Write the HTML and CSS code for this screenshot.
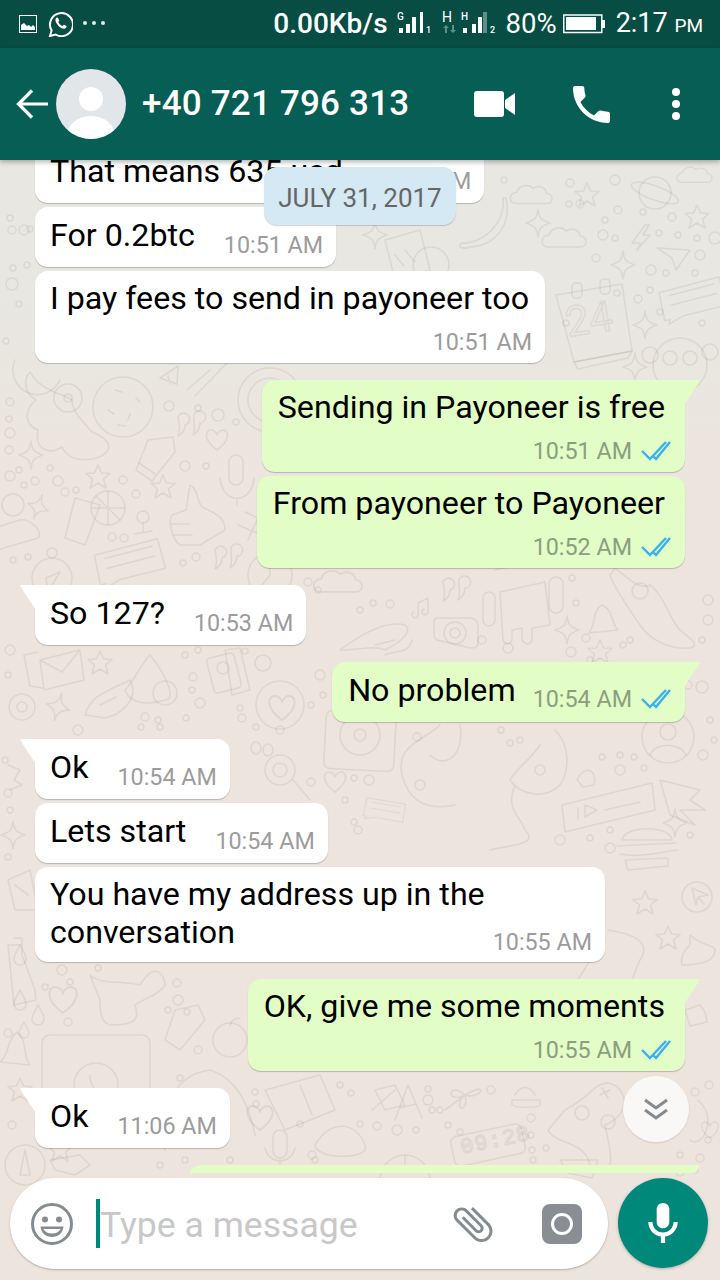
FILE: index.html
```html
<!DOCTYPE html>
<html lang="en">
<head>
<meta charset="utf-8">
<title>WhatsApp chat</title>
<link rel="stylesheet" href="styles.css">
</head>
<body>
<div class="app">
  <svg class="wallpaper" width="720" height="1280" viewBox="0 0 720 1280" aria-hidden="true">
    <defs>
      <path id="s5" d="M0-12 3.5-4 12-3.5 5.5 2 8 11 0 6-8 11-5.5 2-12-3.5-3.5-4Z"/>
      <path id="s4" d="M0-14C1-5 3-3 12 0 3 3 1 5 0 14-1 5-3 3-12 0-3-3-1-5 0-14Z"/>
      <path id="ht" d="M0 10C-14 0-12-10-6-10-3-10 0-7 0-5 0-7 3-10 6-10 12-10 14 0 0 10Z"/>
      <path id="cl" d="M-18 8C-26 8-26-3-17-4-15-12-4-13 0-8 6-12 14-9 14-3 22-2 22 8 14 8Z"/>
      <path id="dr" d="M0-10C4-3 6 0 6 4A6 6 0 0 1-6 4C-6 0-4-3 0-10Z"/>
      <path id="qt" d="M-10-8A6 6 0 1 1-3 0C-3 5-6 9-10 11-8 7-8 4-9-2ZM6-10A6 6 0 1 1 12-2C12 3 9 8 5 10 7 6 7 3 6-4Z"/>
      <g id="ch"><path d="M-32-10 32-22 38 8-8 16-24 24-22 19-28 20Z"/><path d="M-22-6 26-15M-20 4 28-5"/></g>
    </defs>
    <g class="doodle">
      <use href="#cl" transform="translate(533 196) scale(.95)"/>
      <use href="#s5" transform="translate(587 195)"/>
      <ellipse cx="655" cy="193" rx="16" ry="16"/><ellipse cx="655" cy="193" rx="25" ry="7" transform="rotate(20 655 193)"/>
      <use href="#s5" transform="translate(697 217)"/>
      <use href="#cl" transform="translate(696 176) scale(.8)"/>
      <path d="M503 198C506 225 480 245 462 243 456 246 462 250 470 247 495 246 512 225 506 198Z"/>
      <use href="#s4" transform="translate(538 223)"/>
      <use href="#cl" transform="translate(566 239)"/>
      <path d="M645 225 632 243H641L637 250 650 235H643L649 225Z"/>
      <path d="M657 248 690 250 676 270 672 258Z"/>
      <use href="#s4" transform="translate(623 265)"/>
      <path d="M556 295 622 284 632 351 574 362Z"/><path d="M574 362 632 351 628 358 578 369Z"/>
      <rect x="572" y="283" width="10" height="15" rx="4"/><rect x="600" y="279" width="10" height="15" rx="4"/>
      <text class="dtext" x="568" y="337" transform="rotate(-9 568 337)">24</text>
      <use href="#ch" transform="translate(690 300) rotate(-4) scale(.95)"/>
      <use href="#s4" transform="translate(645 325)"/>
      <use href="#s4" transform="translate(635 367)"/>
      <circle cx="680" cy="365" r="27"/><circle cx="670" cy="358" r="7"/><circle cx="690" cy="358" r="7"/><circle cx="650" cy="355" r="8"/><circle cx="710" cy="352" r="8"/>
      <path d="M385 240 420 230 430 270 395 280ZM405 250 415 262M395 255 404 266"/>
      <circle cx="431" cy="265" r="18"/>
      <use href="#s4" transform="translate(375 235)"/>

      <path d="M30 372C22 380 26 395 36 400 24 410 24 425 38 430 34 450 50 455 62 447 70 465 100 462 108 450 112 442 100 435 92 432 82 420 72 412 72 400 60 392 42 392 30 372Z"/>
      <circle cx="68" cy="398" r="14"/><circle cx="68" cy="398" r="4"/>
      <path d="M15 360A24 24 0 0 0 60 380"/>
      <circle cx="123" cy="407" r="30"/><path d="M115 390 122 392M136 398 140 402M108 410 114 414M130 414 128 420M118 425 126 426"/>
      <use href="#s4" transform="translate(31 455)"/>
      <path d="M173 437 148 440 136 470 152 481 175 452Z"/><path d="M139 463 155 474"/>
      <use href="#s5" transform="translate(98 477)"/>
      <use href="#s5" transform="translate(163 487)"/>
      <rect x="229" y="455" width="14" height="30" rx="7"/><path d="M220 478C222 505 252 505 254 478M237 500V505"/>
      <use href="#ht" transform="translate(217 440)"/>
      <use href="#qt" transform="translate(188 425)"/>
      <path d="M190 485C200 490 196 505 204 508 220 515 225 520 225 530L200 545 180 545C172 540 168 520 172 515L186 510C188 500 188 495 190 485Z"/><path d="M172 524H190M174 535H192"/>
      <path d="M75 498 100 505 85 545 65 538Z"/><circle cx="108" cy="508" r="17"/><path d="M108 491V525M92 508H125M96 496 120 520"/>
      <use href="#s4" transform="translate(38 507) rotate(20) scale(.9)"/>
      <circle cx="13" cy="505" r="11"/><path d="M0 549 38 538C44 530 28 518 20 520L0 526"/>
      <circle cx="143" cy="517" r="6"/><path d="M143 523V532M135 534 152 531"/>
      <use href="#ch" transform="translate(127 563) rotate(-4)"/>
      <circle cx="52" cy="578" r="20"/><circle cx="52" cy="553" r="5"/><path d="M60 572 48 592 46 578Z"/>
      <circle cx="270" cy="400" r="32"/><circle cx="270" cy="400" r="22"/>
      <path d="M187 390 210 370M195 396 230 360"/>
      <path d="M160 378 178 366 177 384ZM168 376 170 384"/>
      <path d="M245 512 258 518 248 540M238 525 262 535"/>
      <use href="#qt" transform="translate(225 558)"/>
      <circle cx="270" cy="575" r="22"/><path d="M270 560V575L262 585"/>
      <use href="#cl" transform="translate(340 583) scale(1.1)"/>

      <use href="#qt" transform="translate(453 590)"/>
      <rect x="483" y="592" width="12" height="34" rx="6"/><rect x="549" y="577" width="14" height="36" rx="7"/>
      <path d="M500 592 545 582 550 625 532 628V640C530 646 524 644 522 640V628L512 630V640C510 646 504 644 503 640Z"/>
      <path d="M495 570 540 560"/>
      <path d="M437 618H470C476 618 478 622 478 626V643C478 648 474 648 470 648L437 640C434 638 434 636 434 632V622C434 620 435 618 437 618Z"/><circle cx="455" cy="633" r="11"/><circle cx="455" cy="633" r="5"/>
      <path d="M418 615V603L428 598V612M418 615A3 3 0 1 1 414 612M428 612A3 3 0 1 1 424 609"/>
      <path d="M602 605C592 610 596 625 589 633L618 630C610 622 614 610 602 605Z"/>
      <path d="M615 568C630 580 640 590 650 585 664 595 670 620 680 630 692 640 700 645 690 648 670 650 650 640 640 625 630 610 615 590 610 575Z"/>
      <circle cx="640" cy="591" r="8"/>
      <path d="M340 650C360 635 385 620 405 625 412 630 405 640 385 650 375 645 360 650 340 650Z"/>
      <path d="M375 645 395 640M385 655C395 650 408 655 412 640"/>
      <use href="#s4" transform="translate(567 630)"/>
      <use href="#s5" transform="translate(600 652)"/>
      <rect x="325" y="712" width="70" height="58" rx="6" transform="rotate(3 360 740)"/><circle cx="360" cy="735" r="20"/><circle cx="360" cy="735" r="6"/>
      <circle cx="668" cy="737" r="26"/><circle cx="668" cy="732" r="8"/><path d="M650 755C655 742 680 742 686 755"/>
      <path d="M440 725C425 740 395 745 402 775 410 805 430 810 455 805M460 725C465 755 445 770 430 755"/>
      <path d="M515 785C505 810 520 815 525 830 540 845 510 845 490 850M555 730C570 745 570 770 560 785 545 800 520 795 510 780 515 770 530 760 540 745"/>
      <circle cx="420" cy="785" r="5"/><circle cx="540" cy="770" r="5"/>
      <path d="M577 780C583 765 598 768 594 785L583 787Z"/>
      <path d="M562 805 652 783 655 810 565 832Z"/><path d="M578 808V820M585 805 597 810 585 817ZM605 810 640 802"/>
      <use href="#ht" transform="translate(335 782)"/>
      <path d="M660 780 700 790 690 800 705 810 680 810 695 825 670 815Z"/>
      <use href="#s4" transform="translate(675 823)"/>
      <use href="#ch" transform="translate(383 810) rotate(20) scale(.6)"/>
      <path d="M225 650 240 648 250 690 232 695Z"/>
      <rect x="210" y="655" width="28" height="36" rx="4" transform="rotate(-14 224 673)"/>
      <circle cx="223" cy="668" r="6"/>
      <use href="#s5" transform="translate(100 663)"/>
      <path d="M40 660 80 650 84 680 44 690ZM40 660 62 672 80 650"/>
      <path d="M24 655 38 652M24 655 30 686 42 688"/>
      <circle cx="22" cy="707" r="13"/><circle cx="22" cy="707" r="5"/>
      <use href="#s4" transform="translate(58 707) rotate(15)"/>
      <path d="M85 715C90 695 110 690 130 680 140 700 120 715 105 718ZM100 705 116 697"/>
      <path d="M125 690C135 680 140 665 150 655 170 680 175 700 165 700 150 705 130 705 125 690Z"/>
      <circle cx="165" cy="693" r="12"/>
      <circle cx="263" cy="663" r="8"/><use href="#ht" transform="translate(282 708) scale(1.2)"/><circle cx="280" cy="705" r="24"/>
      <circle cx="280" cy="770" r="15"/><circle cx="280" cy="770" r="7"/><ellipse cx="256" cy="748" rx="5" ry="6"/><ellipse cx="268" cy="750" rx="5" ry="6"/><path d="M293 780 310 800"/>
      <path d="M8 765 20 770 14 780 22 785 10 790"/>
      <use href="#s4" transform="translate(13 835)"/>
      <path d="M8 880 30 870 38 910 15 910ZM15 885 28 895"/>
      <path d="M8 945H22V955L35 990 36 1000 14 1005ZM14 938H22V945"/>
      <use href="#dr" transform="translate(20 955)"/>
      <use href="#dr" transform="translate(20 1000)"/><use href="#dr" transform="translate(38 1015)"/><use href="#dr" transform="translate(24 1030) scale(.8)"/>
      <use href="#ht" transform="translate(63 1000) scale(1.3)"/>
      <path d="M90 975C100 985 120 980 140 985 155 960 165 975 165 985 160 995 140 1000 135 1005 140 1020 135 1025 110 1025 100 1022 100 1010 100 1000Z"/>
      <path d="M198 1005 175 1010 165 1040 180 1050 205 1020Z"/>
      <circle cx="230" cy="1040" r="17"/><path d="M230 1025C232 1018 238 1018 240 1018"/>
      <path d="M17 1032C6 1040 10 1055 0 1062L30 1065C22 1055 28 1040 17 1032Z"/>
      <rect x="42" y="1035" width="108" height="70" rx="8"/><circle cx="96" cy="1085" r="22"/><path d="M90 1075C90 1085 95 1092 105 1095"/>
      <use href="#s5" transform="translate(20 1090)"/>
      <path d="M165 1150C165 1100 175 1075 210 1070 240 1080 250 1110 255 1135"/>
      <circle cx="180" cy="1078" r="3"/>
      <path d="M265 1090 320 1075 335 1110 285 1130ZM300 1085 312 1115"/>
      <use href="#ht" transform="translate(260 1118) scale(1.2)"/>
      <rect x="273" y="1130" width="14" height="28" rx="7"/><path d="M265 1148C268 1165 292 1165 295 1148M280 1160V1165"/>
      <path d="M315 1145C330 1120 355 1120 365 1145 372 1160 315 1160 315 1145Z"/>
      <circle cx="25" cy="1165" r="20"/><path d="M20 1175 25 1150 30 1175Z"/>
      <path d="M50 1160 80 1155 90 1165 75 1175 55 1170Z"/>
      <use href="#s5" transform="translate(60 1150)"/>
      <path d="M188 1130C180 1120 175 1120 170 1110"/>

      <path d="M375 1090 395 1085 405 1105 385 1110ZM372 1110 395 1090"/>
      <path d="M395 1120 408 1085 422 1118M400 1108 416 1104"/>
      <path d="M465 1095C448 1080 445 1105 465 1095 450 1110 470 1115 465 1095 482 1100 490 1080 465 1095ZM465 1095 445 1110"/>
      <path d="M515 1095C520 1085 530 1085 535 1095M512 1100H540V1105C540 1108 515 1108 512 1105Z"/>
      <path d="M565 1110C585 1100 590 1090 600 1085 620 1075 640 1110 605 1125 610 1150 620 1180 590 1165 585 1140 555 1145 548 1130Z"/>
      <circle cx="582" cy="1113" r="7"/><circle cx="608" cy="1122" r="7"/><path d="M600 1095 610 1090M602 1088 608 1098"/>
      <rect x="452" y="1130" width="72" height="30" rx="6" transform="rotate(-12 488 1145)"/>
      <text class="dsmall" x="462" y="1154" transform="rotate(-12 462 1154)">09:28</text>
      <circle cx="405" cy="1180" r="25"/><path d="M405 1155V1173M382 1170 428 1170"/>
      <path d="M560 1160H598L592 1178 568 1173Z"/>
      <use href="#ht" transform="translate(710 1130) scale(.8)"/>
      <path d="M698 1100C720 1120 700 1150 690 1140"/>

      <path d="M622 840C625 825 670 825 672 840ZM617 846 676 843M620 854C640 858 660 852 678 850M625 860 668 858 668 866 628 870Z"/>
      <circle cx="697" cy="897" r="15"/><path d="M692 888 708 895 698 897 696 905ZM698 897 704 904"/>
      <use href="#s5" transform="translate(645 903)"/>
      <use href="#s5" transform="translate(668 938)"/>
      <path d="M690 935C700 945 715 945 715 950 715 965 690 965 682 965 680 955 685 950 690 945Z"/>
      <path d="M608 930C640 935 650 945 640 960 635 970 635 975 630 985"/>
      <path d="M700 1005 705 1012 707 1022 690 1026 685 1010Z"/>
      <path d="M412 990C470 980 500 1020 520 1040"/>
      <path d="M560 1010 590 960M610 1000 630 1010"/>
    </g>
    <g class="dots">
      <circle cx="504" cy="180" r="3"/><circle cx="570" cy="183" r="4"/><circle cx="569" cy="204" r="3"/><circle cx="580" cy="204" r="4"/><circle cx="615" cy="180" r="5"/><circle cx="618" cy="210" r="4"/><circle cx="605" cy="220" r="3"/><circle cx="643" cy="212" r="3"/><circle cx="672" cy="217" r="4"/><circle cx="603" cy="235" r="5"/><circle cx="615" cy="238" r="3"/><circle cx="659" cy="233" r="3"/><circle cx="678" cy="235" r="3"/><circle cx="697" cy="238" r="3"/><circle cx="715" cy="238" r="6"/><circle cx="700" cy="255" r="5"/><circle cx="596" cy="258" r="4"/><circle cx="617" cy="293" r="3"/>
      <circle cx="651" cy="270" r="5"/><circle cx="666" cy="273" r="3"/><circle cx="695" cy="273" r="3"/><circle cx="638" cy="299" r="4"/><circle cx="650" cy="290" r="3"/><circle cx="660" cy="312" r="3"/><circle cx="702" cy="323" r="3"/><circle cx="566" cy="323" r="3"/><circle cx="30" cy="229" r="3"/><circle cx="10" cy="218" r="3"/><circle cx="24" cy="230" r="5"/><circle cx="27" cy="265" r="3"/><circle cx="12" cy="230" r="4"/><circle cx="13" cy="268" r="3"/><circle cx="12" cy="284" r="6"/><circle cx="19" cy="304" r="3"/><circle cx="6" cy="341" r="3"/><circle cx="10" cy="402" r="4"/><circle cx="9" cy="419" r="3"/><circle cx="10" cy="433" r="5"/><circle cx="9" cy="450" r="4"/><circle cx="19" cy="470" r="3"/><circle cx="10" cy="476" r="5"/><circle cx="24" cy="485" r="3"/><circle cx="35" cy="481" r="4"/><circle cx="50" cy="468" r="3"/><circle cx="58" cy="481" r="5"/><circle cx="65" cy="492" r="4"/><circle cx="76" cy="490" r="3"/><circle cx="123" cy="480" r="4"/><circle cx="136" cy="494" r="4"/><circle cx="185" cy="466" r="5"/><circle cx="206" cy="466" r="3"/><circle cx="169" cy="406" r="5"/><circle cx="198" cy="408" r="3"/><circle cx="218" cy="415" r="6"/><circle cx="236" cy="422" r="3"/><circle cx="13" cy="560" r="3"/><circle cx="28" cy="557" r="3"/><circle cx="183" cy="563" r="3"/><circle cx="196" cy="557" r="4"/><circle cx="112" cy="537" r="4"/><circle cx="124" cy="538" r="4"/>
      <circle cx="318" cy="590" r="3"/><circle cx="373" cy="603" r="3"/><circle cx="390" cy="604" r="4"/><circle cx="360" cy="610" r="3"/><circle cx="308" cy="582" r="4"/><circle cx="482" cy="640" r="4"/><circle cx="508" cy="648" r="5"/><circle cx="572" cy="578" r="3"/><circle cx="576" cy="603" r="3"/><circle cx="586" cy="638" r="4"/><circle cx="571" cy="652" r="5"/><circle cx="590" cy="660" r="3"/><circle cx="623" cy="645" r="3"/><circle cx="630" cy="640" r="3"/><circle cx="708" cy="600" r="5"/><circle cx="708" cy="620" r="5"/><circle cx="702" cy="640" r="3"/><circle cx="688" cy="685" r="4"/><circle cx="702" cy="687" r="6"/><circle cx="710" cy="720" r="3"/><circle cx="407" cy="682" r="3"/><circle cx="320" cy="675" r="5"/><circle cx="323" cy="695" r="3"/><circle cx="311" cy="705" r="3"/><circle cx="417" cy="737" r="4"/><circle cx="501" cy="730" r="3"/><circle cx="520" cy="740" r="3"/><circle cx="510" cy="743" r="3"/><circle cx="602" cy="757" r="3"/><circle cx="620" cy="755" r="3"/><circle cx="634" cy="757" r="3"/><circle cx="620" cy="770" r="5"/><circle cx="644" cy="768" r="3"/><circle cx="703" cy="755" r="5"/><circle cx="714" cy="740" r="3"/><circle cx="369" cy="780" r="5"/><circle cx="311" cy="782" r="4"/><circle cx="354" cy="778" r="3"/><circle cx="345" cy="800" r="3"/><circle cx="354" cy="822" r="3"/><circle cx="358" cy="830" r="4"/><circle cx="610" cy="830" r="3"/><circle cx="560" cy="840" r="5"/><circle cx="590" cy="838" r="3"/><circle cx="610" cy="848" r="5"/><circle cx="690" cy="835" r="3"/>
      <circle cx="10" cy="650" r="5"/><circle cx="8" cy="675" r="3"/><circle cx="185" cy="655" r="3"/><circle cx="198" cy="650" r="3"/><circle cx="245" cy="651" r="3"/><circle cx="193" cy="677" r="4"/><circle cx="192" cy="690" r="3"/><circle cx="200" cy="703" r="5"/><circle cx="240" cy="708" r="3"/><circle cx="242" cy="718" r="4"/><circle cx="256" cy="727" r="3"/><circle cx="280" cy="730" r="4"/><circle cx="145" cy="717" r="4"/><circle cx="158" cy="720" r="3"/><circle cx="186" cy="718" r="3"/><circle cx="78" cy="730" r="5"/><circle cx="141" cy="727" r="3"/><circle cx="160" cy="727" r="3"/><circle cx="5" cy="760" r="3"/><circle cx="8" cy="793" r="4"/><circle cx="10" cy="810" r="3"/><circle cx="8" cy="857" r="3"/>
      <circle cx="62" cy="970" r="5"/><circle cx="98" cy="968" r="3"/><circle cx="70" cy="982" r="3"/><circle cx="45" cy="987" r="3"/><circle cx="177" cy="983" r="4"/><circle cx="178" cy="1000" r="5"/><circle cx="168" cy="1010" r="3"/><circle cx="187" cy="1012" r="3"/><circle cx="8" cy="1033" r="4"/><circle cx="68" cy="1022" r="4"/><circle cx="198" cy="1050" r="4"/><circle cx="12" cy="1125" r="4"/><circle cx="255" cy="1092" r="3"/><circle cx="256" cy="1104" r="3"/><circle cx="300" cy="1124" r="3"/><circle cx="312" cy="1155" r="4"/><circle cx="185" cy="1160" r="3"/><circle cx="160" cy="1165" r="3"/><circle cx="230" cy="1160" r="3"/><circle cx="315" cy="1160" r="3"/><circle cx="351" cy="1093" r="3"/><circle cx="340" cy="1085" r="3"/><circle cx="360" cy="1124" r="3"/><circle cx="428" cy="1089" r="3"/><circle cx="428" cy="1100" r="5"/><circle cx="432" cy="1110" r="3"/><circle cx="491" cy="1090" r="4"/><circle cx="440" cy="1110" r="3"/><circle cx="448" cy="1125" r="3"/><circle cx="460" cy="1132" r="3"/><circle cx="377" cy="1126" r="4"/><circle cx="397" cy="1130" r="5"/><circle cx="416" cy="1130" r="3"/><circle cx="531" cy="1118" r="4"/><circle cx="531" cy="1135" r="3"/><circle cx="532" cy="1150" r="3"/><circle cx="533" cy="1160" r="3"/><circle cx="546" cy="1148" r="3"/><circle cx="695" cy="1092" r="4"/><circle cx="709" cy="1085" r="4"/><circle cx="708" cy="1140" r="3"/><circle cx="680" cy="1155" r="3"/><circle cx="700" cy="1158" r="4"/><circle cx="680" cy="1172" r="4"/><circle cx="695" cy="1170" r="3"/>
    </g>
  </svg>

  <div class="statusbar">
    <svg class="st-img" width="18" height="18" viewBox="0 0 18 18"><rect x=".5" y=".5" width="17" height="17" fill="none" stroke="#fff"/><path d="M2 15V10L5 8 8 11 10 10 12 12 14 10 16 12V15Z" fill="#fff"/></svg>
    <svg class="st-wa" width="25" height="26" viewBox="0 0 25 26"><path d="M2 25 3.6 19.5A11.5 11.5 0 1 1 7.6 23.5Z" fill="none" stroke="#fff" stroke-width="2"/><path d="M8.5 6.5C7 8 7 10 9 13 11 16 14 18 16.5 17.7 18 17.4 18.8 16 18.6 15L15.9 13.7 14.6 15C13 14.5 11 12.5 10.3 11L11.4 9.7 10 6.7Z" fill="#fff"/></svg>
    <span class="st-dots"><i></i><i></i><i></i></span>
    <span class="st-speed">0.00Kb/s</span>
    <svg class="st-sig" width="100" height="48" viewBox="0 0 100 48">
      <text class="sig-t" x="0" y="20">G</text>
      <rect class="b" x="2" y="28" width="4" height="5"/><rect class="b" x="9" y="24" width="4" height="9"/><rect class="b" x="15" y="17" width="4" height="16"/><rect class="b" x="23" y="12" width="3" height="21"/>
      <text class="sig-n" x="29" y="33">1</text>
      <text class="sig-h" x="45" y="22">H</text>
      <path class="dim" d="M48 33V28H46L49 25 52 28H50V33ZM55 25V30H53L56 33 59 30H57V25Z"/>
      <text class="sig-t" x="64" y="20">H</text>
      <rect class="b" x="66" y="28" width="4" height="5"/><rect class="b" x="75" y="24" width="4" height="9"/><rect class="b" x="81" y="17" width="4" height="16"/><rect class="dim" x="86" y="12" width="4" height="21"/>
      <text class="sig-n" x="93" y="33">2</text>
    </svg>
    <span class="st-pct">80%</span>
    <svg class="st-bat" width="42" height="20" viewBox="0 0 42 20"><rect x=".75" y="1" width="38" height="17.5" fill="none" stroke="#fff" stroke-width="1.5"/><rect x="3" y="3" width="30" height="13" fill="#fff"/><rect x="39" y="6" width="3" height="8" fill="#fff"/></svg>
    <span class="st-time">2:17 <small>PM</small></span>
  </div>

  <div class="toolbar">
    <svg class="tb-back" width="32" height="30" viewBox="0 0 32 30"><path d="M32 15H3M16 1.5 2.5 15 16 28.5" fill="none" stroke="#fff" stroke-width="3.2"/></svg>
    <div class="avatar"><span class="av-head"></span><span class="av-body"></span></div>
    <div class="title">+40 721 796 313</div>
    <svg class="tb-video" width="42" height="26" viewBox="0 0 42 26"><rect x="0" y="0" width="30" height="26" rx="3" fill="#fff"/><path d="M31 9 41 2V24L31 17Z" fill="#fff"/></svg>
    <svg class="tb-call" width="37" height="37" viewBox="3 3 18 18"><path fill="#fff" d="M6.62 10.79c1.44 2.83 3.76 5.14 6.59 6.59l2.2-2.2c.27-.27.67-.36 1.02-.24 1.12.37 2.33.57 3.57.57.55 0 1 .45 1 1V20c0 .55-.45 1-1 1-9.39 0-17-7.61-17-17 0-.55.45-1 1-1h3.5c.55 0 1 .45 1 1 0 1.25.2 2.45.57 3.57.11.35.03.74-.25 1.02l-2.2 2.2z"/></svg>
    <span class="tb-more"><i></i><i></i><i></i></span>
  </div>

  <div class="chat">
    <div class="bubble in first"><span class="msg">That means 635 usd</span><span class="time">10:51 AM</span></div>
    <div class="bubble in"><span class="msg">For 0.2btc</span><span class="time">10:51 AM</span></div>
    <div class="bubble in stack"><span class="msg">I pay fees to send in payoneer too</span><span class="time">10:51 AM</span></div>

    <div class="bubble out stack tail gap-m"><span class="msg">Sending in Payoneer is free</span><span class="meta"><span class="time">10:51 AM</span><svg class="ticks" width="30" height="20" viewBox="0 0 30 20"><use href="#tk"/></svg></span></div>
    <div class="bubble out stack"><span class="msg">From payoneer to Payoneer</span><span class="meta"><span class="time">10:52 AM</span><svg class="ticks" width="30" height="20" viewBox="0 0 30 20"><use href="#tk"/></svg></span></div>

    <div class="bubble in tail gap-m"><span class="msg">So 127?</span><span class="time">10:53 AM</span></div>

    <div class="bubble out tail gap-m row-out"><span class="msg">No problem</span><span class="meta"><span class="time">10:54 AM</span><svg class="ticks" width="30" height="20" viewBox="0 0 30 20"><use href="#tk"/></svg></span></div>

    <div class="bubble in tail gap-m"><span class="msg">Ok</span><span class="time">10:54 AM</span></div>
    <div class="bubble in"><span class="msg">Lets start</span><span class="time">10:54 AM</span></div>
    <div class="bubble in wrap"><span class="msg">You have my address up in the<br>conversation</span><span class="time">10:55 AM</span></div>

    <div class="bubble out stack tail gap-m"><span class="msg">OK, give me some moments</span><span class="meta"><span class="time">10:55 AM</span><svg class="ticks" width="30" height="20" viewBox="0 0 30 20"><use href="#tk"/></svg></span></div>

    <div class="bubble in tail gap-m"><span class="msg">Ok</span><span class="time">11:06 AM</span></div>

    <div class="bubble out tail gap-m partial"></div>
  </div>

  <div class="date-chip">JULY 31, 2017</div>
  <div class="scroll-btn"><svg width="26" height="24" viewBox="0 0 26 24"><path d="M2 3 13 11 24 3M2 13 13 21 24 13" fill="none" stroke="#858a8e" stroke-width="3"/></svg></div>

  <div class="composer">
    <div class="pill">
      <svg class="ic-emoji" width="42" height="42" viewBox="0 0 42 42"><circle cx="21" cy="21" r="19.5" fill="none" stroke="#858c91" stroke-width="3"/><circle cx="14" cy="16.5" r="3" fill="#858c91"/><circle cx="28" cy="16.5" r="3" fill="#858c91"/><path d="M9.5 23.5H32.5C32 30 27 34 21 34S10 30 9.5 23.5Z" fill="#858c91"/><path d="M12.5 26H29.5C28 29 25 30.5 21 30.5S14 29 12.5 26Z" fill="#fff"/></svg>
      <span class="caret"></span>
      <span class="placeholder">Type a message</span>
      <svg class="ic-clip" width="48" height="48" viewBox="0 0 24 24"><path fill="#858c91" transform="rotate(-45 12 12)" d="M16.5 6v11.5c0 2.21-1.79 4-4 4s-4-1.79-4-4V5c0-1.38 1.12-2.5 2.5-2.5s2.5 1.12 2.5 2.5v10.5c0 .55-.45 1-1 1s-1-.45-1-1V6H10v9.5c0 1.38 1.12 2.5 2.5 2.5s2.5-1.12 2.5-2.5V5c0-2.21-1.79-4-4-4S7 2.79 7 5v12.5c0 3.04 2.46 5.5 5.5 5.5s5.5-2.46 5.5-5.5V6h-1.5z"/></svg>
      <svg class="ic-cam" width="40" height="40" viewBox="0 0 40 40"><rect width="40" height="40" rx="8" fill="#8a8e94"/><circle cx="20" cy="20" r="9.5" fill="none" stroke="#fff" stroke-width="3"/></svg>
    </div>
    <div class="mic"><svg width="30" height="40" viewBox="5 2 14 19"><path fill="#fff" d="M12 14c1.66 0 3-1.34 3-3V5c0-1.66-1.34-3-3-3S9 3.34 9 5v6c0 1.66 1.34 3 3 3z"/><path fill="#fff" d="M17 11c0 2.76-2.24 5-5 5s-5-2.24-5-5H5c0 3.53 2.61 6.43 6 6.92V21h2v-3.08c3.39-.49 6-3.39 6-6.92h-2z"/></svg></div>
  </div>

  <svg class="defs-only" width="0" height="0"><defs><g id="tk" fill="none" stroke="#38b0f2" stroke-width="2.4"><path d="M1 10 9 18 25 1"/><path d="M12 15 15 18 29 1"/></g></defs></svg>
</div>
</body>
</html>
```

FILE: styles.css
```css
* { box-sizing: border-box; }
html, body { margin: 0; padding: 0; }
body { width: 720px; height: 1280px; overflow: hidden; font-family: Roboto, "Liberation Sans", sans-serif; }

.app {
  position: relative;
  width: 720px;
  height: 1280px;
  overflow: hidden;
  display: flex;
  flex-direction: column;
  background: linear-gradient(#e8e7e2 0, #e8e7e2 280px, #ede5dd 520px, #ede5dd 100%);
}
.wallpaper { position: absolute; left: 0; top: 0; }
.doodle { fill: none; stroke: #8a7f70; stroke-opacity: .14; stroke-width: 1.6; stroke-linejoin: round; stroke-linecap: round; }
.dots { fill: none; stroke: #8a7f70; stroke-opacity: .14; stroke-width: 1.5; }
.dtext { font: 42px Roboto, sans-serif; }
.dsmall { font: 22px "Liberation Mono", monospace; letter-spacing: 1px; }
.defs-only { position: absolute; }

/* status bar */
.statusbar {
  position: relative;
  z-index: 3;
  flex: none;
  height: 48px;
  background: #074d43;
  color: #fff;
  display: flex;
  align-items: center;
  padding: 0 17px 0 19px;
}
.st-img { margin-top: -1px; }
.st-wa { margin-left: 11px; margin-top: -1px; }
.st-dots { display: flex; gap: 5px; margin-left: 10px; margin-top: -2px; }
.st-dots i { width: 4px; height: 4px; border-radius: 50%; background: #dfe9e7; }
.st-speed { margin-left: auto; font-size: 28px; font-weight: 500; line-height: 50px; }
.st-sig { margin-left: 9px; }
.b, .sig-t, .sig-n, .sig-h { fill: #fff; }
.dim { fill: #5f8f87; }
.sig-t { font: 500 10px Roboto, sans-serif; }
.sig-n { font: 500 9px Roboto, sans-serif; }
.sig-h { font: 400 14px Roboto, sans-serif; }
.st-pct { margin-left: 9px; font-size: 27.5px; line-height: 50px; }
.st-bat { margin-left: 6px; }
.st-time { margin-left: 11px; font-size: 27px; line-height: 50px; }
.st-time small { font-size: 19px; }

/* toolbar */
.toolbar {
  position: relative;
  z-index: 3;
  flex: none;
  height: 112px;
  background: #075e54;
  box-shadow: 0 2px 5px rgba(0,0,0,.3);
  display: flex;
  align-items: center;
  padding: 0 40px 0 16px;
  color: #fff;
}
.avatar {
  position: relative;
  overflow: hidden;
  width: 70px;
  height: 70px;
  margin-left: 8px;
  border-radius: 50%;
  background: #e2e6e9;
  flex: none;
}
.av-head { position: absolute; left: 23px; top: 18px; width: 24px; height: 24px; border-radius: 50%; background: #fff; }
.av-body { position: absolute; left: 11px; top: 47px; width: 48px; height: 40px; border-radius: 50%; background: #fff; }
.title { margin-left: 16px; margin-top: -2px; font-size: 35px; font-weight: 500; letter-spacing: .2px; }
.tb-video { margin-left: auto; }
.tb-call { margin-left: 57px; }
.tb-more { display: flex; flex-direction: column; gap: 4px; margin-left: 62px; }
.tb-more i { width: 8px; height: 8px; border-radius: 50%; background: #fff; }

/* chat */
.chat {
  position: relative;
  z-index: 1;
  flex: none;
  height: 1013px;
  overflow: hidden;
  display: flex;
  flex-direction: column;
  align-items: flex-start;
  padding: 0 35px;
  gap: 4px;
}
.bubble {
  position: relative;
  flex: none;
  display: flex;
  align-items: flex-end;
  gap: 29px;
  padding: 9px 13px 13px 15px;
  border-radius: 13px;
  background: #fff;
  box-shadow: 0 1px 1px rgba(0,0,0,.22);
  font-size: 32.2px;
  line-height: 38px;
  color: #000;
}
.bubble.first { margin-top: -17px; }
.bubble.out { align-self: flex-end; background: #e2fdc5; padding-left: 16px; }
.gap-m { margin-top: 13px; }
.msg { white-space: nowrap; }
.time { font-size: 23.3px; line-height: 24px; color: #9c9c9c; margin-bottom: -3px; white-space: nowrap; }
.out .time { color: #8c9e81; }
.meta { display: flex; align-items: center; gap: 9px; }
.ticks { flex: none; }
.bubble.stack { flex-direction: column; align-items: stretch; gap: 0; padding-top: 8px; padding-bottom: 9px; padding-right: 16px; }
.bubble.stack .time { align-self: flex-end; margin-top: 13px; margin-bottom: 0; margin-right: -3px; }
.bubble.out.stack { padding-right: 20px; padding-left: 16px; }
.bubble.out.stack .meta { justify-content: flex-end; margin-top: 13px; margin-right: -6px; }
.bubble.out.stack .meta .time { margin: 0; }
.bubble.row-out { gap: 17px; padding-right: 14px; }
.bubble.row-out .time { margin: 0; }
.bubble.row-out .meta { margin-bottom: -2px; }
.bubble.wrap { gap: 8px; padding-top: 8px; padding-bottom: 11px; }
.bubble.wrap .time { margin-bottom: -3px; }
.bubble.in.tail { border-top-left-radius: 0; }
.bubble.out.tail { border-top-right-radius: 0; }
.bubble.in.tail::before {
  content: "";
  position: absolute;
  left: -15px;
  top: 0;
  width: 16px;
  height: 25px;
  background: #fff;
  clip-path: polygon(0 0, 100% 0, 100% 100%, 2px 4px);
}
.bubble.out.tail::before {
  content: "";
  position: absolute;
  right: -15px;
  top: 0;
  width: 16px;
  height: 25px;
  background: #e2fdc5;
  clip-path: polygon(0 0, 100% 0, calc(100% - 2px) 4px, 0 100%);
}
.bubble.partial { width: 497px; height: 60px; }

/* overlays */
.date-chip {
  position: absolute;
  z-index: 2;
  left: 264px;
  top: 167px;
  width: 192px;
  height: 58px;
  padding-top: 3px;
  display: flex;
  align-items: center;
  justify-content: center;
  background: #d4e9f4;
  border-radius: 13px;
  box-shadow: 0 1px 1px rgba(0,0,0,.18);
  color: #666;
  font-size: 26px;
}
.scroll-btn {
  position: absolute;
  z-index: 2;
  left: 623px;
  top: 1076px;
  width: 66px;
  height: 66px;
  border-radius: 50%;
  background: rgba(250,250,249,.88);
  box-shadow: 0 1px 2px rgba(0,0,0,.12);
  display: flex;
  align-items: center;
  justify-content: center;
}

/* composer */
.composer {
  position: relative;
  z-index: 2;
  flex: none;
  display: flex;
  align-items: flex-start;
  gap: 10px;
  padding: 5px 12px 0 10px;
}
.pill {
  flex: none;
  width: 598px;
  height: 91px;
  border-radius: 46px;
  background: #fff;
  box-shadow: 0 1px 2px rgba(0,0,0,.25);
  display: flex;
  align-items: center;
  padding: 0 26px 0 21px;
}
.ic-emoji { flex: none; }
.caret { flex: none; width: 4px; height: 49px; margin-left: 23px; background: #00897b; }
.placeholder { flex: 1; margin-left: 0; padding-top: 3px; font-size: 35.6px; color: #c8c8c8; white-space: nowrap; }
.ic-clip { flex: none; }
.ic-cam { flex: none; margin-left: 45px; }
.mic {
  flex: none;
  width: 90px;
  height: 90px;
  border-radius: 50%;
  background: #00897b;
  box-shadow: 0 1px 3px rgba(0,0,0,.25);
  display: flex;
  align-items: center;
  justify-content: center;
}
```
